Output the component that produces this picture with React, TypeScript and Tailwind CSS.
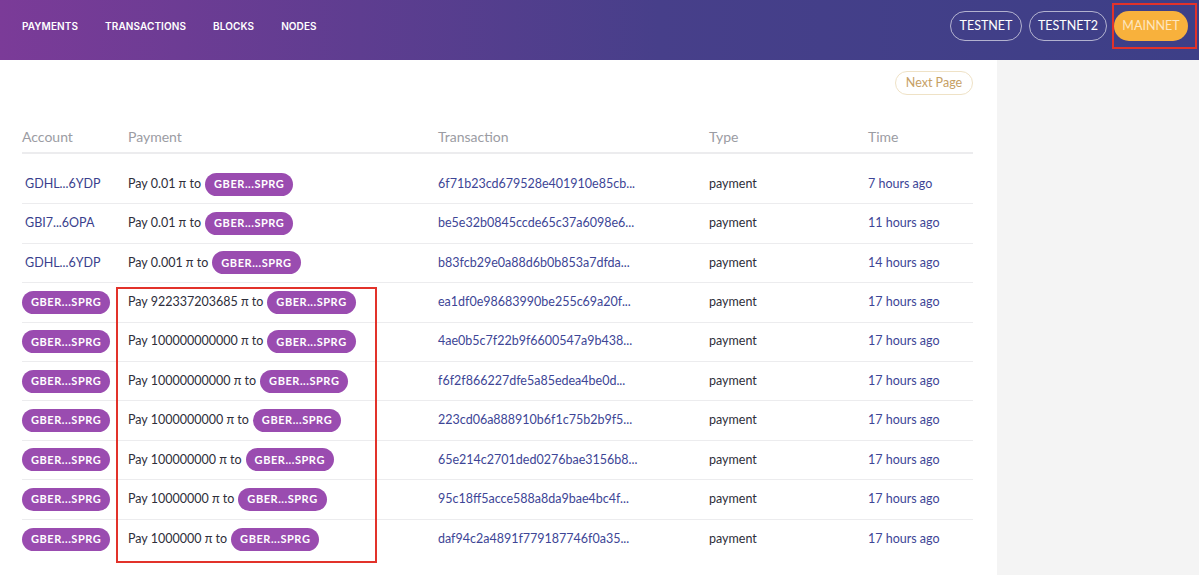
const rows = [
  { account: "GDHL...6YDP", pill: false, amount: "0.01", tx: "6f71b23cd679528e401910e85cb...", time: "7 hours ago" },
  { account: "GBI7...6OPA", pill: false, amount: "0.01", tx: "be5e32b0845ccde65c37a6098e6...", time: "11 hours ago" },
  { account: "GDHL...6YDP", pill: false, amount: "0.001", tx: "b83fcb29e0a88d6b0b853a7dfda...", time: "14 hours ago" },
  { account: "GBER...SPRG", pill: true, amount: "922337203685", tx: "ea1df0e98683990be255c69a20f...", time: "17 hours ago" },
  { account: "GBER...SPRG", pill: true, amount: "100000000000", tx: "4ae0b5c7f22b9f6600547a9b438...", time: "17 hours ago" },
  { account: "GBER...SPRG", pill: true, amount: "10000000000", tx: "f6f2f866227dfe5a85edea4be0d...", time: "17 hours ago" },
  { account: "GBER...SPRG", pill: true, amount: "1000000000", tx: "223cd06a888910b6f1c75b2b9f5...", time: "17 hours ago" },
  { account: "GBER...SPRG", pill: true, amount: "100000000", tx: "65e214c2701ded0276bae3156b8...", time: "17 hours ago" },
  { account: "GBER...SPRG", pill: true, amount: "10000000", tx: "95c18ff5acce588a8da9bae4bc4f...", time: "17 hours ago" },
  { account: "GBER...SPRG", pill: true, amount: "1000000", tx: "daf94c2a4891f779187746f0a35...", time: "17 hours ago" },
];

const cols = "grid grid-cols-[106px_310px_271px_159px_1fr] items-center";

function Pill({ label }: { label: string }) {
  return (
    <span className="inline-flex h-[23px] items-center rounded-full bg-[#9a4cb0] px-[9px] text-[11px] font-bold tracking-[0.05em] text-white">
      {label}
    </span>
  );
}

export default function App() {
  return (
    <div
      className="relative min-h-[575px] w-[1199px] overflow-hidden bg-white text-[12.5px] text-[#2e2e3a]"
      style={{ fontFamily: "Lato, 'Noto Sans', sans-serif" }}
    >
      <header className="flex h-[60px] items-center justify-between bg-[linear-gradient(90deg,#7b3b98_0%,#5e3d90_30%,#473f8a_55%,#3d3f87_100%)] pb-[8px] pl-[22px] pr-[11px]">
        <nav
          className="flex gap-[27px] text-[10px] font-semibold tracking-[0.01em] text-white"
          style={{ fontFamily: "Inter, sans-serif" }}
        >
          <span>PAYMENTS</span>
          <span>TRANSACTIONS</span>
          <span>BLOCKS</span>
          <span>NODES</span>
        </nav>
        <div className="flex items-center gap-[7px] text-[12.5px]">
          <span className="flex h-[30px] w-[72px] items-center justify-center rounded-full border border-white/60 text-white">TESTNET</span>
          <span className="flex h-[30px] w-[78px] items-center justify-center rounded-full border border-white/60 text-white">TESTNET2</span>
          <span className="flex h-[30px] w-[74px] items-center justify-center rounded-full bg-[#f8b13c] text-[#fde7c0]">MAINNET</span>
        </div>
      </header>

      <div className="flex min-h-[515px]">
        <main className="w-[997px] pl-[22px] pr-[24px] pt-[11px]">
          <div className="flex justify-end">
            <span className="flex h-[24px] w-[78px] items-center justify-center rounded-full border border-[#efe2c6] text-[12.5px] text-[#c6a064]">
              Next Page
            </span>
          </div>
          <div className={`${cols} mt-[31px] h-[28px] border-b-2 border-[#ececee] pb-[8px] text-[14px] text-[#9b9ca3]`}>
            <span>Account</span>
            <span>Payment</span>
            <span>Transaction</span>
            <span>Type</span>
            <span>Time</span>
          </div>
          <div className="mt-[11px]">
            {rows.map((r, i) => (
              <div
                key={i}
                className={`${cols} h-[39.4px] ${i < rows.length - 1 ? "border-b border-[#ececee]" : ""}`}
              >
                <span>
                  {r.pill ? <Pill label={r.account} /> : <span className="pl-[3px] text-[#3a3f8d]">{r.account}</span>}
                </span>
                <span className="flex items-center gap-[4px]">
                  <span>Pay {r.amount} π to</span>
                  <Pill label="GBER...SPRG" />
                </span>
                <span className="text-[#3d4596]">{r.tx}</span>
                <span>payment</span>
                <span className="text-[#3d4596]">{r.time}</span>
              </div>
            ))}
          </div>
        </main>
        <aside className="flex-1 bg-[#f4f4f4]" />
      </div>

      <div className="pointer-events-none absolute left-[1112px] top-[3px] h-[46px] w-[85px] border-2 border-[#e2322a]" />
      <div className="pointer-events-none absolute left-[116px] top-[287px] h-[276px] w-[261px] border-2 border-[#e2322a]" />
    </div>
  );
}
